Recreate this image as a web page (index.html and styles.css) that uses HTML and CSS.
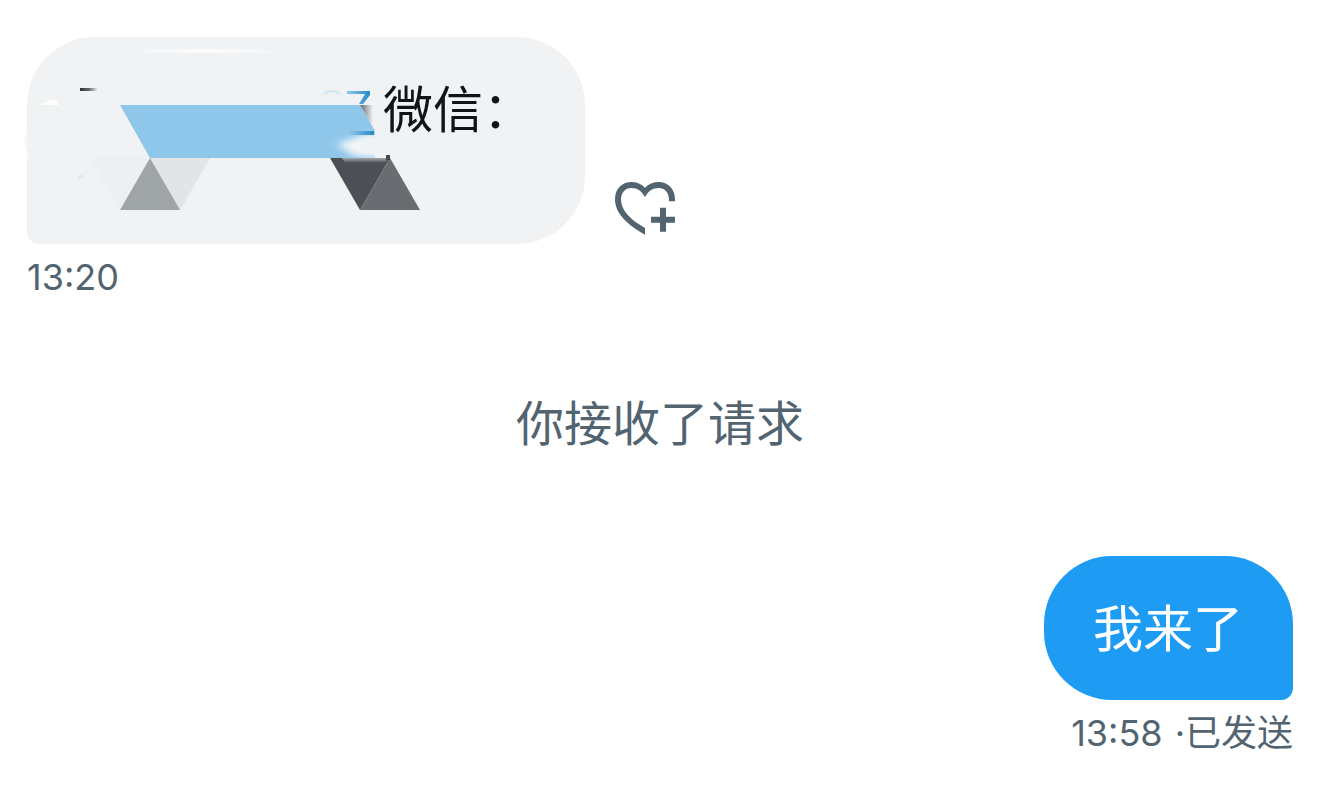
FILE: index.html
```html
<!DOCTYPE html>
<html lang="zh-CN">
<head>
<meta charset="utf-8">
<meta name="viewport" content="width=device-width, initial-scale=1">
<title>私信</title>
<link rel="stylesheet" href="styles.css">
</head>
<body>
<main class="chat">
  <section class="message">
    <div class="message-row">
      <div class="bubble bubble-in">
        <p class="masked-line">微信：</p>
        <svg class="mask" viewBox="0 0 558 207" aria-hidden="true">
          <defs>
            <linearGradient id="dash"><stop offset="0" stop-color="#2d2e33"/><stop offset=".5" stop-color="#66686c"/><stop offset="1" stop-color="#f0f2f4"/></linearGradient>
            <linearGradient id="link"><stop offset="0" stop-color="#8fc7eb"/><stop offset="1" stop-color="#2589c9"/></linearGradient>
            <linearGradient id="edge"><stop offset="0" stop-color="#63666b"/><stop offset="1" stop-color="#f0f2f4"/></linearGradient>
            <linearGradient id="shade" x2="0" y2="1"><stop offset="0" stop-color="#a5a8aa"/><stop offset="1" stop-color="#4c4f55"/></linearGradient>
            <linearGradient id="shine"><stop offset="0" stop-color="#fff" stop-opacity="0"/><stop offset=".5" stop-color="#fff" stop-opacity=".8"/><stop offset="1" stop-color="#fff" stop-opacity="0"/></linearGradient>
            <filter id="soft" x="-30%" y="-50%" width="160%" height="200%"><feGaussianBlur stdDeviation="5 3"/></filter>
            <clipPath id="band"><path d="M93 68H333L348 94V98H362V121H123Z"/></clipPath>
          </defs>
          <rect x="93" y="12" width="170" height="4" fill="url(#shine)"/>
          <path d="M13 68Q15 65 19 66Q24 60 30 64L33 68Z" fill="#fff" opacity=".8"/>
          <path d="M-3 100Q0 98 0 92V115Q0 122 3 118L-2 112Z" fill="#f5f7f8"/>
          <rect x="53" y="51" width="18" height="3" fill="url(#dash)"/>
          <rect x="51" y="138" width="6" height="4" rx="2" fill="#e5e7e8"/>
          <path d="M63 121H123L93 173Z" fill="#eeeff0"/>
          <path d="M123 121H183L153 173Z" fill="#e3e4e5"/>
          <path d="M123 121L153 173H93Z" fill="#9fa4a7"/>
          <path d="M93 68H333L348 94V121H123Z" fill="#8fc7eb"/>
          <path d="M333 68H346V90Z" fill="url(#edge)"/>
          <path d="M297 57Q305 51 313 57" fill="none" stroke="#cfe6f2" stroke-width="2"/>
          <path d="M320 54H343V58L336 67H332L338 57H320Z" fill="url(#link)"/>
          <g clip-path="url(#band)">
            <path d="M310 107L333 99H375V119H328L318 113Z" fill="#f2f6f9" filter="url(#soft)"/>
            <rect x="335" y="98" width="40" height="19" fill="#f0f3f5" filter="url(#soft)"/>
          </g>
          <rect x="322" y="94" width="25" height="4" fill="url(#link)"/>
          <path d="M303 121H363L333 173Z" fill="#4c4f55"/>
          <path d="M315 121H361L358 126H318Z" fill="url(#shade)"/>
          <path d="M363 121L393 173H333Z" fill="#696c70"/>
          <rect x="359" y="118" width="4" height="5" fill="#45494e"/>
        </svg>
      </div>
      <button class="react" type="button" aria-label="添加回应">
        <svg class="react-icon" viewBox="45 52 180 159" aria-hidden="true">
          <path d="M135 210C80 180 45 145 45 104C45 72 66 52 94 52C110 52 125 58 135 69C145 58 160 52 176 52C204 52 225 73 225 104V110H207V104C207 84 194 70 176 70C157 70 146 79 135 97C124 79 113 70 94 70C76 70 63 84 63 104C63 138 92 166 135 190ZM180 129H198V156H225V174H198V201H180V174H153V156H180Z"/>
        </svg>
      </button>
    </div>
    <time class="meta">13:20</time>
  </section>

  <p class="notice">你接收了请求</p>

  <section class="message message-out">
    <div class="bubble bubble-out"><p>我来了</p></div>
    <div class="meta meta-sent"><time>13:58</time><span>·已发送</span></div>
  </section>
</main>
</body>
</html>
```
FILE: styles.css
```css
* {
  box-sizing: border-box;
}

body {
  margin: 0;
  background: #fff;
  color: #0f1419;
  font-family: Inter, "Noto Sans CJK SC", sans-serif;
}

p {
  margin: 0;
}

.chat {
  display: flex;
  flex-direction: column;
  padding: 37px 27px 40px;
}

.message {
  display: flex;
  flex-direction: column;
  align-items: flex-start;
}

.message-out {
  align-items: flex-end;
}

.message-row {
  display: flex;
  align-items: flex-end;
  gap: 30px;
}

.bubble {
  position: relative;
  padding: 42px 50px 39px 49px;
  border-radius: 68px;
  font-size: 50px;
  line-height: 63px;
}

.bubble-in {
  min-width: 558px;
  min-height: 207px;
  border-bottom-left-radius: 12px;
  background: #f0f2f4;
}

.bubble-out {
  border-bottom-right-radius: 12px;
  background: #1e9bf2;
  color: #fff;
}

.masked-line {
  padding-left: 307px;
}

.mask {
  position: absolute;
  inset: 0;
  width: 558px;
  height: 207px;
  overflow: visible;
}

.react {
  display: flex;
  margin: 0 0 9px;
  padding: 0;
  border: 0;
  background: none;
}

.react-icon {
  width: 60px;
  height: 53px;
  fill: #536471;
}

.meta {
  margin-top: 8px;
  color: #536471;
  font-size: 36px;
  line-height: 50px;
}

.meta-sent {
  display: flex;
  gap: 12px;
}

.notice {
  margin: 90px 0 100px;
  color: #536471;
  font-size: 48px;
  line-height: 64px;
  text-align: center;
}
```
